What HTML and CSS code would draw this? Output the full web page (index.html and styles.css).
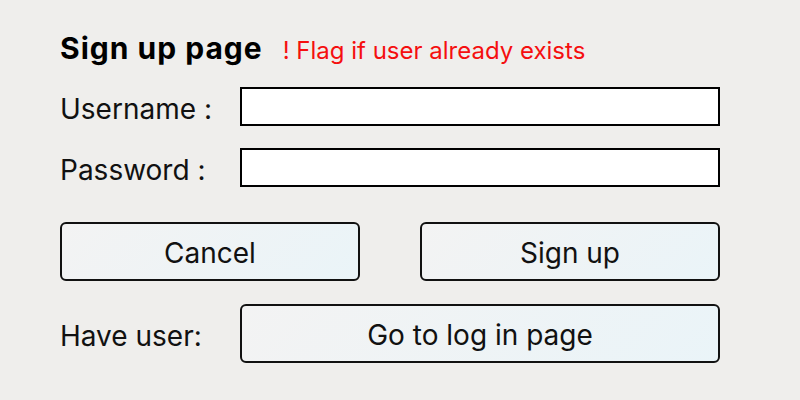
FILE: index.html
```html
<!DOCTYPE html>
<html>
<head>
<meta charset="utf-8">
<link rel="stylesheet" href="styles.css">
</head>
<body>
<div class="page">
  <div class="title-row">
    <h1 class="title">Sign up page</h1>
    <span class="flag">! Flag if user already exists</span>
  </div>
  <div class="field-row">
    <label class="label">Username :</label>
    <div class="input"></div>
  </div>
  <div class="field-row row-gap">
    <label class="label">Password :</label>
    <div class="input"></div>
  </div>
  <div class="button-row">
    <button class="btn">Cancel</button>
    <button class="btn">Sign up</button>
  </div>
  <div class="field-row login-row">
    <span class="label">Have user:</span>
    <button class="btn btn-wide">Go to log in page</button>
  </div>
</div>
</body>
</html>
```
FILE: styles.css
```css
html, body {
  margin: 0;
  padding: 0;
  background: #efeeec;
}
body {
  font-family: Inter, "Noto Sans", sans-serif;
  color: #111;
}
.page {
  width: 660px;
  padding: 28px 0 0 60px;
}
.title-row {
  display: flex;
  align-items: baseline;
  gap: 20px;
  height: 42px;
}
.title {
  margin: 0;
  font-size: 30px;
  font-weight: 700;
  letter-spacing: 1px;
  line-height: 40px;
  color: #000;
}
.flag {
  color: #f50f0f;
  font-size: 24px;
}
.field-row {
  display: flex;
  align-items: center;
  margin-top: 17px;
}
.row-gap {
  margin-top: 22px;
}
.label {
  width: 180px;
  flex: none;
  font-size: 28px;
  padding-top: 5px;
}
.input {
  flex: 1;
  height: 35px;
  border: 2px solid #000;
  background: #fff;
}
.button-row {
  display: flex;
  gap: 60px;
  margin-top: 35px;
}
.btn {
  flex: 1;
  height: 59px;
  border: 2px solid #111;
  border-radius: 6px;
  background: linear-gradient(135deg, #f3f3f3 0%, #eaf4f8 100%);
  font-family: inherit;
  font-size: 28px;
  color: #111;
  padding: 3px 0 0;
}
.login-row {
  margin-top: 23px;
}
```
